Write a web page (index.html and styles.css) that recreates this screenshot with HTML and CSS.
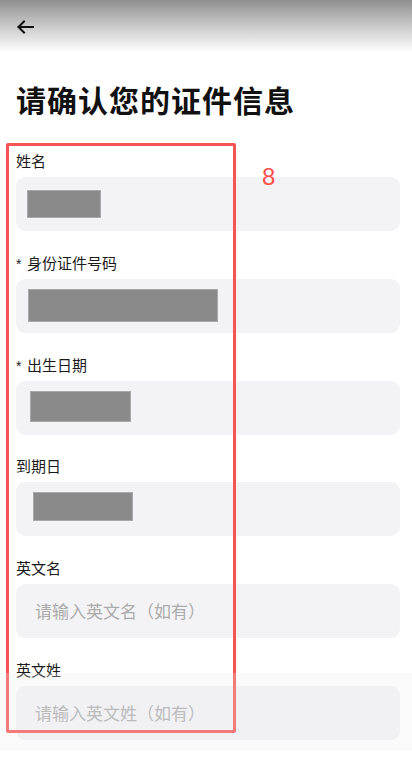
FILE: index.html
```html
<!DOCTYPE html>
<html lang="zh-CN">
<head>
<meta charset="utf-8">
<meta name="viewport" content="width=device-width, initial-scale=1">
<title>请确认您的证件信息</title>
<link rel="stylesheet" href="styles.css">
</head>
<body>
<div class="page">
  <header class="topbar">
    <svg class="back" width="18" height="14" viewBox="0 0 18 14" aria-hidden="true">
      <path d="M17 7H2.5M8 1.5L2.5 7L8 12.5" fill="none" stroke="#111" stroke-width="2" stroke-linecap="square" stroke-linejoin="miter"/>
    </svg>
  </header>
  <h1 class="title">请确认您的证件信息</h1>
  <form class="form">
    <div class="field">
      <div class="label">姓名</div>
      <div class="box"><span class="redact r1"></span></div>
    </div>
    <div class="field">
      <div class="label"><span class="star">*</span>身份证件号码</div>
      <div class="box"><span class="redact r2"></span></div>
    </div>
    <div class="field">
      <div class="label"><span class="star">*</span>出生日期</div>
      <div class="box"><span class="redact r3"></span></div>
    </div>
    <div class="field">
      <div class="label">到期日</div>
      <div class="box"><span class="redact r4"></span></div>
    </div>
    <div class="field">
      <div class="label">英文名</div>
      <div class="box"><span class="placeholder">请输入英文名（如有）</span></div>
    </div>
    <div class="field">
      <div class="label">英文姓</div>
      <div class="box"><span class="placeholder">请输入英文姓（如有）</span></div>
    </div>
  </form>
  <div class="highlight"></div>
  <div class="mark">8</div>
  <div class="veil"></div>
</div>
</body>
</html>
```
FILE: styles.css
```css
* { box-sizing: border-box; }
html, body {
  margin: 0;
  padding: 0;
  background: #fff;
}
body {
  font-family: "Noto Sans CJK SC", "Noto Sans", sans-serif;
  color: #111;
}
.page {
  position: relative;
  width: 412px;
  height: 770px;
  overflow: hidden;
  background: #fff;
}
.topbar {
  height: 52px;
  display: flex;
  align-items: center;
  padding: 2px 0 0 16px;
  background: linear-gradient(to bottom, #8e8e8e 0px, #b8b8b8 18px, #e2e2e2 38px, #fdfdfd 52px);
}
.back { display: block; }
.title {
  margin: 26px 0 0 16px;
  font-size: 30px;
  line-height: 42px;
  font-weight: 700;
  letter-spacing: 1px;
  color: #111;
}
.form {
  padding: 31px 12px 0 16px;
  display: flex;
  flex-direction: column;
  gap: 21.8px;
}
.field {
  display: flex;
  flex-direction: column;
  gap: 6px;
}
.label {
  height: 20px;
  font-size: 15px;
  line-height: 20px;
  color: #1a1a1a;
  display: flex;
  align-items: center;
}
.star {
  font-family: "Liberation Sans", sans-serif;
  font-size: 14px;
  line-height: 14px;
  width: 11px;
  margin-top: 2px;
}
.box {
  height: 54px;
  border-radius: 9px;
  background: #f3f3f5;
  display: flex;
  align-items: center;
}
.redact {
  display: block;
  background: #8a8a8a;
  border: 1px solid #a8a8a8;
}
.r1 { width: 74px; height: 28px; margin-left: 11px; }
.r2 { width: 190px; height: 33px; margin-left: 12px; }
.r3 { width: 101px; height: 31px; margin-left: 14px; margin-top: -3px; }
.r4 { width: 100px; height: 29px; margin-left: 17px; margin-top: -5px; }
.placeholder {
  margin-left: 19px;
  font-size: 17px;
  line-height: 24px;
  color: #ababab;
}
.highlight {
  position: absolute;
  left: 6px;
  top: 143px;
  width: 230px;
  height: 590px;
  border: 3px solid #f65454;
  border-radius: 2px;
  pointer-events: none;
}
.mark {
  position: absolute;
  left: 262px;
  top: 163px;
  font-family: "Liberation Sans", sans-serif;
  font-size: 24px;
  line-height: 28px;
  color: #ff4f4f;
}
.veil {
  position: absolute;
  left: 0;
  top: 673px;
  width: 412px;
  height: 77px;
  background: rgba(236, 236, 240, 0.25);
  pointer-events: none;
}
```
